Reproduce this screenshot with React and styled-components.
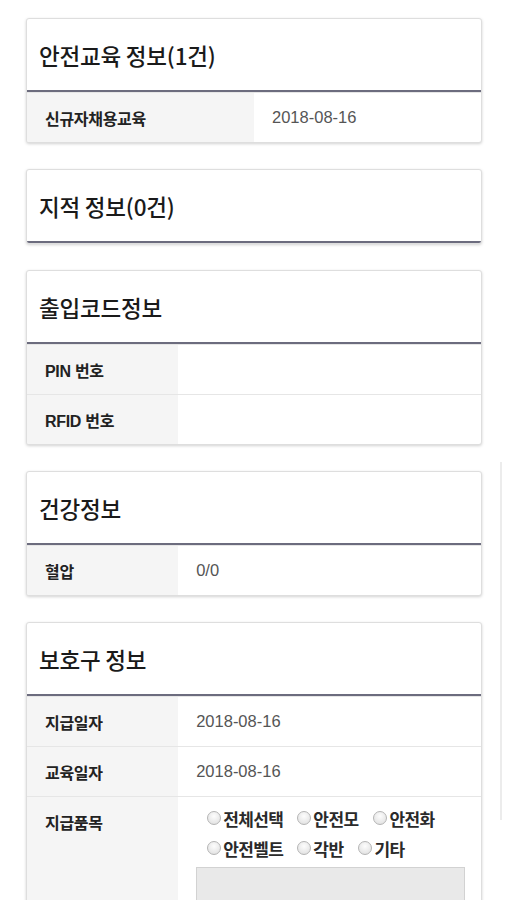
import styled, { createGlobalStyle } from "styled-components";

const GlobalStyle = createGlobalStyle`
  html, body {
    margin: 0;
    padding: 0;
    background: #fff;
  }
  body {
    font-family: "Liberation Sans", "Noto Sans CJK KR", sans-serif;
    color: #222;
  }
`;

const Page = styled.div`
  display: flex;
  flex-direction: column;
  gap: 26px;
  padding: 18px 25px 40px 26px;
`;

const Card = styled.section`
  background: #fff;
  border: 1px solid #dedede;
  border-radius: 3px;
  box-shadow: 0 1px 3px rgba(0, 0, 0, 0.18);
  overflow: hidden;
`;

const Header = styled.div`
  height: 71px;
  display: flex;
  align-items: center;
  padding: 0 12px;
  border-bottom: 2px solid #6c6c7e;
  > h2 {
    margin: 0;
    font-family: "Noto Sans CJK KR", sans-serif;
    font-size: 22.5px;
    font-weight: 500;
    color: #1a1a1a;
    letter-spacing: -0.2px;
  }
`;

const Row = styled.div`
  display: flex;
  min-height: 49px;
  border-top: 1px solid #e6e6e6;
  &:first-of-type {
    border-top: none;
  }
`;

const Label = styled.div`
  flex: 0 0 ${(p) => p.$w};
  background: #f5f5f5;
  display: flex;
  align-items: ${(p) => (p.$top ? "flex-start" : "center")};
  padding: ${(p) => (p.$top ? "13px 18px" : "0 18px")};
  box-sizing: border-box;
  font-family: "Liberation Sans", "Noto Sans CJK KR", sans-serif;
  font-size: 16px;
  font-weight: 700;
  color: #222;
  letter-spacing: -0.3px;
`;

const Value = styled.div`
  flex: 1;
  display: flex;
  align-items: center;
  padding: 0 18px;
  font-family: "Liberation Sans", "Noto Sans CJK KR", sans-serif;
  font-size: 16.5px;
  color: #555;
`;

const Items = styled.div`
  flex: 1;
  padding: 6px 18px 0 18px;
`;

const RadioGroup = styled.div`
  display: flex;
  flex-wrap: wrap;
  padding-left: 11px;
  width: 245px;
`;

const RadioItem = styled.label`
  display: inline-flex;
  align-items: center;
  height: 30px;
  margin-right: ${(p) => p.$gap}px;
  font-family: "Noto Sans CJK KR", sans-serif;
  font-size: 17px;
  font-weight: 700;
  color: #2a2a2a;
  letter-spacing: -0.6px;
`;

const Radio = styled.input.attrs({ type: "radio" })`
  appearance: none;
  margin: 0 2px 0 0;
  width: 14px;
  height: 14px;
  border-radius: 50%;
  border: 1px solid #b5b5b5;
  background: radial-gradient(circle at 50% 35%, #fdfdfd 0%, #e6e6e6 70%, #d8d8d8 100%);
  box-sizing: border-box;
`;

const Memo = styled.div`
  margin-top: 4px;
  height: 40px;
  width: 267px;
  background: #e9e9e9;
  border: 1px solid #d2d2d2;
  border-bottom: none;
`;

const ScrollTrack = styled.div`
  position: fixed;
  left: 500px;
  top: 462px;
  width: 2px;
  height: 358px;
  background: #ececec;
`;

const InfoRow = ({ label, value, w = "33.3%" }) => (
  <Row>
    <Label $w={w}>{label}</Label>
    <Value>{value}</Value>
  </Row>
);

const items = [
  ["전체선택", 14],
  ["안전모", 15],
  ["안전화", 0],
  ["안전벨트", 14],
  ["각반", 15],
  ["기타", 0],
];

export default function App() {
  return (
    <>
      <GlobalStyle />
      <Page>
        <Card>
          <Header>
            <h2>안전교육 정보(1건)</h2>
          </Header>
          <InfoRow label="신규자채용교육" value="2018-08-16" w="50%" />
        </Card>

        <Card>
          <Header>
            <h2>지적 정보(0건)</h2>
          </Header>
        </Card>

        <Card>
          <Header>
            <h2>출입코드정보</h2>
          </Header>
          <InfoRow label="PIN 번호" value="" />
          <InfoRow label="RFID 번호" value="" />
        </Card>

        <Card>
          <Header>
            <h2>건강정보</h2>
          </Header>
          <InfoRow label="혈압" value="0/0" />
        </Card>

        <Card>
          <Header>
            <h2>보호구 정보</h2>
          </Header>
          <InfoRow label="지급일자" value="2018-08-16" />
          <InfoRow label="교육일자" value="2018-08-16" />
          <Row>
            <Label $w="33.3%" $top>
              지급품목
            </Label>
            <Items>
              <RadioGroup>
                {items.map(([name, gap]) => (
                  <RadioItem key={name} $gap={gap}>
                    <Radio name="item" />
                    {name}
                  </RadioItem>
                ))}
              </RadioGroup>
              <Memo />
            </Items>
          </Row>
        </Card>
      </Page>
      <ScrollTrack />
    </>
  );
}
